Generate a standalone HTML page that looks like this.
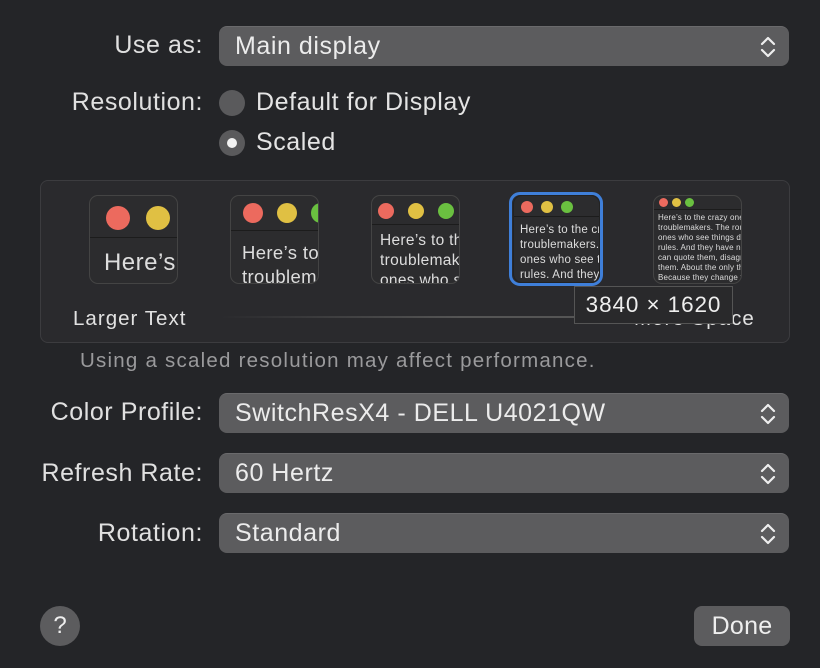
<!DOCTYPE html>
<html><head><meta charset="utf-8"><style>
*{margin:0;padding:0;box-sizing:border-box}
body{width:820px;height:668px;background:#242528;font-family:"Liberation Sans",sans-serif;color:#e4e4e4;position:relative;overflow:hidden;letter-spacing:0.035em}
.a{position:absolute;white-space:nowrap}
.lbl{font-size:25px;text-align:right;width:203px;left:0;color:#e0e0e0}
.pop{position:absolute;left:219px;width:570px;height:40px;background:#5c5c5e;border-radius:8px;font-size:25px;color:#ececec;padding-left:16px;line-height:38px;border-top:1px solid #6a6a6c}
.pop svg{position:absolute;right:13px;top:9px}
.radio{position:absolute;width:26px;height:26px;border-radius:50%;background:#5a5a5c}
.th{position:absolute;background:#2c2c2e;border:1px solid #444;border-radius:9px;overflow:hidden}
.tb{position:absolute;left:0;right:0;top:0;border-bottom:1px solid #1c1c1c}
.d{position:absolute;border-radius:50%}
.r{background:#ec6a5e}.y{background:#e0c043}.g{background:#6ac040}
.tx{position:absolute;color:#ddd;white-space:nowrap;letter-spacing:0.02em}
</style></head><body>
<div class="a lbl" style="top:31px">Use as:</div>
<div class="pop" style="top:26px">Main display<svg width="16" height="22" viewBox="0 0 16 22"><path d="M2 8 L8 2 L14 8 M2 14 L8 20 L14 14" stroke="#eee" stroke-width="2.2" fill="none" stroke-linecap="round" stroke-linejoin="round"/></svg></div>
<div class="a lbl" style="top:88px">Resolution:</div>
<div class="radio" style="left:219px;top:90px"></div>
<div class="a" style="left:256px;top:88px;font-size:25px">Default for Display</div>
<div class="radio" style="left:219px;top:130px"><div style="position:absolute;left:8px;top:8px;width:10px;height:10px;border-radius:50%;background:#f2f2f2"></div></div>
<div class="a" style="left:256px;top:128px;font-size:25px">Scaled</div>

<div class="a" style="left:40px;top:180px;width:750px;height:163px;background:#2a2a2d;border:1px solid #3c3c3f;border-radius:8px"></div>
<div class="a" style="left:220px;top:316px;width:400px;height:2px;background:linear-gradient(90deg,#2a2a2d,#555 60%)"></div>

<div class="th" style="left:89px;top:195px;width:89px;height:89px">
<div class="tb" style="height:42px"></div>
<div class="d r" style="left:16px;top:10px;width:24px;height:24px"></div>
<div class="d y" style="left:56px;top:10px;width:24px;height:24px"></div>
<div class="tx" style="left:14px;top:53px;font-size:24px">Here’s to the</div>
</div>
<div class="th" style="left:230px;top:195px;width:89px;height:89px">
<div class="tb" style="height:35px"></div>
<div class="d r" style="left:12px;top:7px;width:20px;height:20px"></div>
<div class="d y" style="left:46px;top:7px;width:20px;height:20px"></div>
<div class="d g" style="left:80px;top:7px;width:20px;height:20px"></div>
<div class="tx" style="left:11px;top:45px;font-size:18.5px;line-height:24px">Here’s to the<br>troublemakers</div>
</div>
<div class="th" style="left:371px;top:195px;width:89px;height:89px">
<div class="tb" style="height:29px"></div>
<div class="d r" style="left:6px;top:7px;width:16px;height:16px"></div>
<div class="d y" style="left:36px;top:7px;width:16px;height:16px"></div>
<div class="d g" style="left:66px;top:7px;width:16px;height:16px"></div>
<div class="tx" style="left:8px;top:35px;font-size:15.5px;line-height:20px">Here’s to the<br>troublemakers<br>ones who see</div>
</div>
<div class="a" style="left:509px;top:192px;width:94px;height:94px;border:3px solid #3f7fd9;border-radius:11px"></div>
<div class="th" style="left:513px;top:195px;width:87px;height:88px;border-color:#222">
<div class="tb" style="height:21px"></div>
<div class="d r" style="left:7px;top:5px;width:12px;height:12px"></div>
<div class="d y" style="left:27px;top:5px;width:12px;height:12px"></div>
<div class="d g" style="left:47px;top:5px;width:12px;height:12px"></div>
<div class="tx" style="left:6px;top:27px;font-size:11.5px;line-height:15px">Here’s to the crazy<br>troublemakers. The<br>ones who see the<br>rules. And they have</div>
</div>
<div class="th" style="left:653px;top:195px;width:89px;height:89px">
<div class="tb" style="height:14px"></div>
<div class="d r" style="left:5px;top:2px;width:9px;height:9px"></div>
<div class="d y" style="left:18px;top:2px;width:9px;height:9px"></div>
<div class="d g" style="left:31px;top:2px;width:9px;height:9px"></div>
<div class="tx" style="left:4px;top:17px;font-size:8px;line-height:10px">Here’s to the crazy ones<br>troublemakers. The round<br>ones who see things differ<br>rules. And they have no re<br>can quote them, disagree<br>them. About the only thing<br>Because they change things</div>
</div>

<div class="a" style="left:73px;top:307px;font-size:20.5px;color:#e2e2e2;letter-spacing:0.05em">Larger Text</div>
<div class="a" style="left:634px;top:307px;font-size:20.5px;color:#e2e2e2;letter-spacing:0.05em">More Space</div>
<div class="a" style="left:574px;top:286px;width:159px;height:38px;background:#29292b;border:1px solid #555;font-size:22.5px;line-height:36px;text-align:center;color:#eee;letter-spacing:0.04em">3840 × 1620</div>

<div class="a" style="left:80px;top:349px;font-size:20.5px;color:#9a9a9c;letter-spacing:0.06em">Using a scaled resolution may affect performance.</div>

<div class="a lbl" style="top:398px">Color Profile:</div>
<div class="pop" style="top:393px">SwitchResX4 - DELL U4021QW<svg width="16" height="22" viewBox="0 0 16 22"><path d="M2 8 L8 2 L14 8 M2 14 L8 20 L14 14" stroke="#eee" stroke-width="2.2" fill="none" stroke-linecap="round" stroke-linejoin="round"/></svg></div>
<div class="a lbl" style="top:459px">Refresh Rate:</div>
<div class="pop" style="top:453px">60 Hertz<svg width="16" height="22" viewBox="0 0 16 22"><path d="M2 8 L8 2 L14 8 M2 14 L8 20 L14 14" stroke="#eee" stroke-width="2.2" fill="none" stroke-linecap="round" stroke-linejoin="round"/></svg></div>
<div class="a lbl" style="top:519px">Rotation:</div>
<div class="pop" style="top:513px">Standard<svg width="16" height="22" viewBox="0 0 16 22"><path d="M2 8 L8 2 L14 8 M2 14 L8 20 L14 14" stroke="#eee" stroke-width="2.2" fill="none" stroke-linecap="round" stroke-linejoin="round"/></svg></div>

<div class="a" style="left:40px;top:606px;width:40px;height:40px;border-radius:50%;background:#5c5c5e;font-size:24px;text-align:center;line-height:40px;color:#eee;letter-spacing:0">?</div>
<div class="a" style="left:694px;top:606px;width:96px;height:40px;border-radius:8px;background:#5c5c5e;font-size:25px;text-align:center;line-height:40px;color:#eee;letter-spacing:0.01em">Done</div>
</body></html>
